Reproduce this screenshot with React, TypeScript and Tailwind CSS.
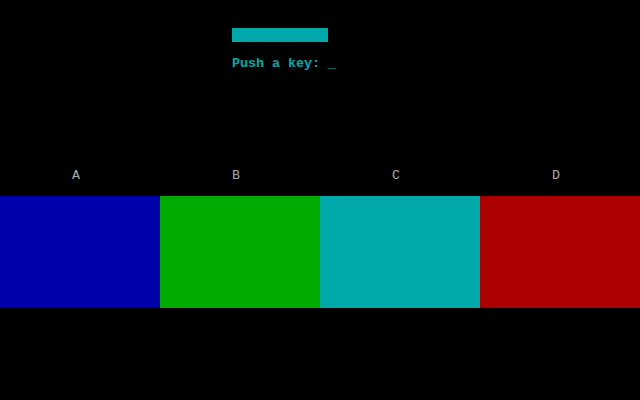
const bars = [
  { label: "A", color: "bg-[#0000aa]" },
  { label: "B", color: "bg-[#00aa00]" },
  { label: "C", color: "bg-[#00aaaa]" },
  { label: "D", color: "bg-[#aa0000]" },
];

export default function App() {
  return (
    <div className="flex h-screen w-full flex-col bg-black font-['Liberation_Mono',monospace] text-[13.33px] leading-4">
      {/* status bar */}
      <div className="ml-[232px] mt-[28px] h-[14px] w-[96px] bg-[#00aaaa]" />
      <p className="ml-[232px] mt-[14px] h-4 whitespace-pre font-bold text-[#00aaaa]">Push a key: _</p>

      {/* labels */}
      <div className="mt-[96px] grid h-4 grid-cols-4 text-[#aaaaaa]">
        {bars.map((b) => (
          <span key={b.label} className="pl-[72px]">
            {b.label}
          </span>
        ))}
      </div>

      {/* colour bars */}
      <div className="mt-[12px] grid h-[112px] grid-cols-4">
        {bars.map((b) => (
          <div key={b.label} className={b.color} />
        ))}
      </div>
    </div>
  );
}
